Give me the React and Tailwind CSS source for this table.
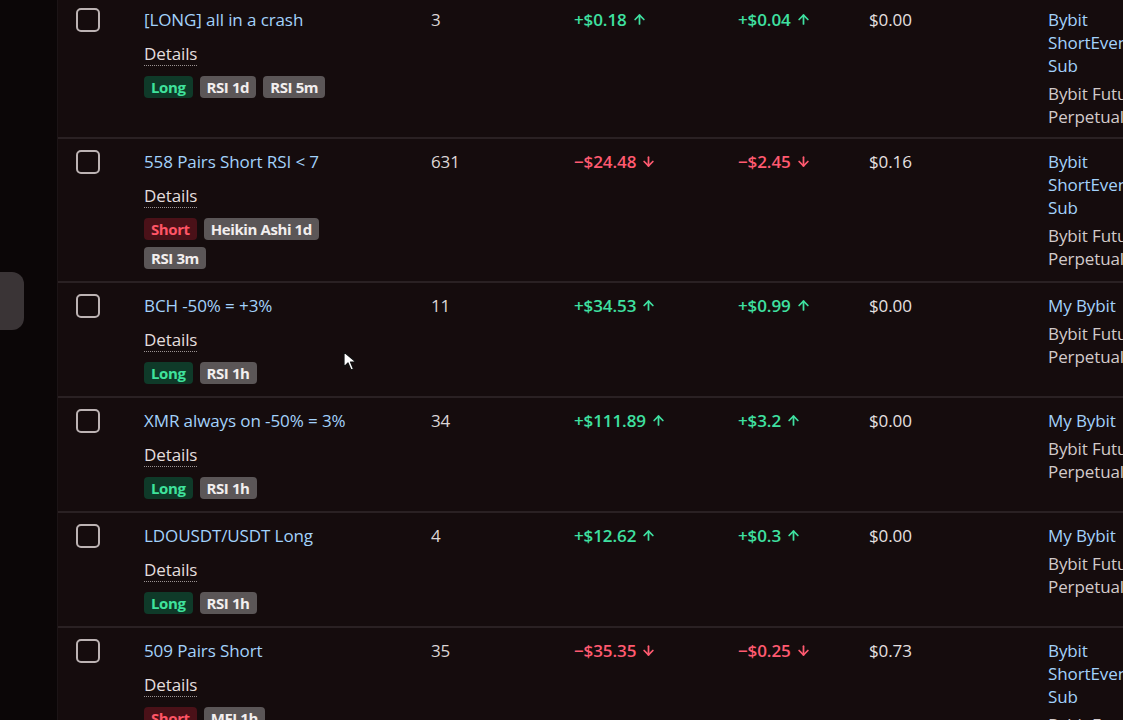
import { ArrowUp, ArrowDown } from 'lucide-react';

const rows = [
    {
        name: '[LONG] all in a crash',
        tags: [{ label: 'Long', kind: 'long' }, { label: 'RSI 1d' }, { label: 'RSI 5m' }],
        count: '3',
        profit: '+$0.18',
        daily: '+$0.04',
        up: true,
        value: '$0.00',
        account: ['Bybit', 'ShortEven', 'Sub'],
        exchange: ['Bybit Futures', 'Perpetual'],
    },
    {
        name: '558 Pairs Short RSI < 7',
        tags: [{ label: 'Short', kind: 'short' }, { label: 'Heikin Ashi 1d' }, { label: 'RSI 3m' }],
        count: '631',
        profit: '−$24.48',
        daily: '−$2.45',
        up: false,
        value: '$0.16',
        account: ['Bybit', 'ShortEven', 'Sub'],
        exchange: ['Bybit Futures', 'Perpetual'],
    },
    {
        name: 'BCH -50% = +3%',
        tags: [{ label: 'Long', kind: 'long' }, { label: 'RSI 1h' }],
        count: '11',
        profit: '+$34.53',
        daily: '+$0.99',
        up: true,
        value: '$0.00',
        account: ['My Bybit'],
        exchange: ['Bybit Futures', 'Perpetual'],
    },
    {
        name: 'XMR always on -50% = 3%',
        tags: [{ label: 'Long', kind: 'long' }, { label: 'RSI 1h' }],
        count: '34',
        profit: '+$111.89',
        daily: '+$3.2',
        up: true,
        value: '$0.00',
        account: ['My Bybit'],
        exchange: ['Bybit Futures', 'Perpetual'],
    },
    {
        name: 'LDOUSDT/USDT Long',
        tags: [{ label: 'Long', kind: 'long' }, { label: 'RSI 1h' }],
        count: '4',
        profit: '+$12.62',
        daily: '+$0.3',
        up: true,
        value: '$0.00',
        account: ['My Bybit'],
        exchange: ['Bybit Futures', 'Perpetual'],
    },
    {
        name: '509 Pairs Short',
        tags: [{ label: 'Short', kind: 'short' }, { label: 'MFI 1h' }],
        count: '35',
        profit: '−$35.35',
        daily: '−$0.25',
        up: false,
        value: '$0.73',
        account: ['Bybit', 'ShortEven', 'Sub'],
        exchange: ['Bybit Futures', 'Perpetual'],
    },
];

const Tag = ({ label, kind }) => {
    const tone =
        kind === 'long'
            ? 'bg-[#0f3a29] text-[#3fe29c]'
            : kind === 'short'
            ? 'bg-[#4a1118] text-[#ff5566]'
            : 'bg-[#5b5657] text-[#f2eeee]';
    return (
        <span className={`h-[22px] px-[7px] rounded-[4px] text-[15px] font-bold leading-[22px] tracking-[-0.4px] ${tone}`}>
            {label}
        </span>
    );
};

const Money = ({ value, up }) => (
    <div className={`flex items-center gap-[5px] font-semibold ${up ? 'text-[#3fe0a0]' : 'text-[#ff5a70]'}`}>
        <span>{value}</span>
        {up ? <ArrowUp size={15} strokeWidth={2.8} /> : <ArrowDown size={15} strokeWidth={2.8} />}
    </div>
);

const Row = ({ row }) => (
    <div className="grid grid-cols-[86px_287px_143px_164px_131px_179px_90px] border-b-2 border-[#2a2123] text-[17px] leading-[23px] tracking-[-0.1px]">
        {/* checkbox */}
        <div className="pl-[18px] pt-[11px]">
            <div className="w-[24px] h-[24px] rounded-[5px] border-2 border-[#bcb3b3]" />
        </div>

        {/* name + details + tags */}
        <div className="pt-[11px] pb-[12px]">
            <div className="text-[#a3d2fb] font-medium">{row.name}</div>
            <div className="mt-[11px]">
                <span className="text-[#e4dede] font-medium border-b border-dotted border-[#9a9292]">Details</span>
            </div>
            <div className="mt-[11px] flex flex-wrap gap-x-[7px] gap-y-[7px] w-[200px]">
                {row.tags.map((t) => (
                    <Tag key={t.label} {...t} />
                ))}
            </div>
        </div>

        <div className="pt-[11px] text-[#ddd6d6] font-medium">{row.count}</div>
        <div className="pt-[11px]">
            <Money value={row.profit} up={row.up} />
        </div>
        <div className="pt-[11px]">
            <Money value={row.daily} up={row.up} />
        </div>
        <div className="pt-[11px] text-[#e6e0e0] font-medium">{row.value}</div>

        {/* account */}
        <div className="pt-[11px] pb-[9px] whitespace-nowrap">
            <div className="text-[#a3d2fb] font-medium">
                {row.account.map((a) => (
                    <div key={a}>{a}</div>
                ))}
            </div>
            <div className="mt-[5px] text-[#d2caca]">
                {row.exchange.map((e) => (
                    <div key={e}>{e}</div>
                ))}
            </div>
        </div>
    </div>
);

export default function App() {
    return (
        <div
            className="relative w-[1123px] h-[720px] overflow-hidden flex bg-[#150c0d]"
            style={{ fontFamily: '"Open Sans", "Noto Sans", sans-serif' }}
        >
            {/* Sidebar strip */}
            <aside className="w-[58px] shrink-0 bg-[#0b0607] border-r border-[#1c1416] flex flex-col">
                <div className="mt-[272px] w-[24px] h-[58px] rounded-r-[12px] bg-[#3a3436]" />
            </aside>

            {/* Table */}
            <div className="flex-1 min-w-0 -mt-[3px]">
                {rows.map((r) => (
                    <Row key={r.name} row={r} />
                ))}
            </div>

            {/* Mouse cursor */}
            <svg className="absolute left-[343px] top-[351px]" width="14" height="20" viewBox="0 0 14 20">
                <path d="M1 1 L1 16 L5 12 L8 19 L10.5 18 L7.5 11 L13 11 Z" fill="#ffffff" stroke="#111" strokeWidth="1.2" strokeLinejoin="round" />
            </svg>
        </div>
    );
}
